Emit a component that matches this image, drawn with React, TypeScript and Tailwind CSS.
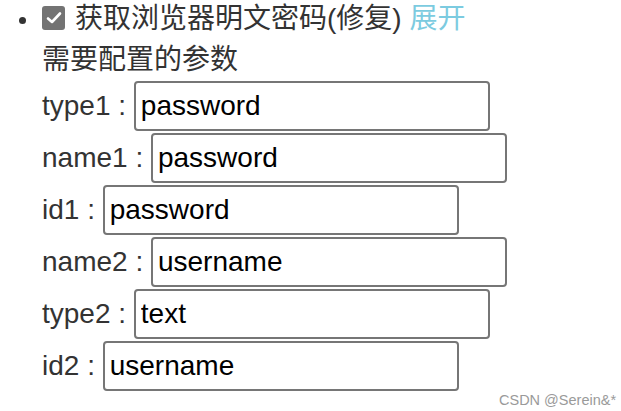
import React from "react";

const rows = [
  { label: "type1 : ", value: "password" },
  { label: "name1 : ", value: "password" },
  { label: "id1 : ", value: "password" },
  { label: "name2 : ", value: "username" },
  { label: "type2 : ", value: "text" },
  { label: "id2 : ", value: "username" },
];

export default function App() {
  return (
    <div
      className="relative w-[621px] h-[411px] bg-white overflow-hidden text-[#333333]"
      style={{ fontFamily: '"Liberation Sans", Arial, "Noto Sans CJK SC", sans-serif' }}
    >
      <div className="flex items-center h-[38px] pl-[19px]">
        <span className="w-[7px] h-[7px] rounded-full bg-[#333333] mt-[3px]" />
        <span className="ml-[16px] w-[23px] h-[24px] rounded-[3px] bg-[#737373] flex items-center justify-center mt-[-3px]">
          <svg width="16" height="14" viewBox="0 0 16 14">
            <path d="M2 7.5 L6 11 L14 2.5" fill="none" stroke="white" strokeWidth="2.6" strokeLinecap="round" strokeLinejoin="round" />
          </svg>
        </span>
        <span className="ml-[10px] text-[28px] leading-none whitespace-pre">
          获取浏览器明文密码(修复) <span className="text-[#7ccbe0]">展开</span>
        </span>
      </div>
      <div className="pl-[42px]">
        <div className="h-[42px] flex items-center text-[28px] leading-none pt-[2px]">需要配置的参数</div>
        <div className="flex flex-col">
          {rows.map((r) => (
            <div key={r.label} className="flex items-center h-[52px]">
              <span className="text-[28px] leading-none whitespace-pre">{r.label}</span>
              <input
                readOnly
                value={r.value}
                className="w-[356px] h-[50px] border-2 border-[#767676] rounded-[4px] px-[5px] text-[28px] text-black bg-white outline-none"
                style={{ fontFamily: '"Liberation Sans", Arial, sans-serif' }}
              />
            </div>
          ))}
        </div>
      </div>
      <div className="absolute left-[499px] top-[393px] text-[14.5px] leading-none text-[#9a9a9a] whitespace-pre">
        CSDN @Serein&amp;*
      </div>
    </div>
  );
}
